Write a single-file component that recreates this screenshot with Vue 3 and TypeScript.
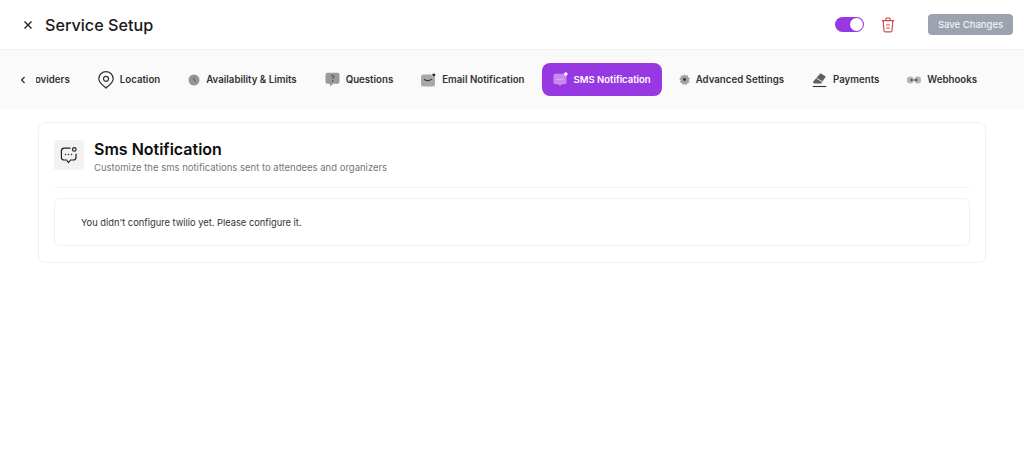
<script setup lang="ts">
interface Tab {
  label: string
  icon: string
  active?: boolean
}

const tabs: Tab[] = [
  { label: 'Providers', icon: 'none' },
  { label: 'Location', icon: 'pin' },
  { label: 'Availability & Limits', icon: 'clock' },
  { label: 'Questions', icon: 'question' },
  { label: 'Email Notification', icon: 'mail' },
  { label: 'SMS Notification', icon: 'sms', active: true },
  { label: 'Advanced Settings', icon: 'gear' },
  { label: 'Payments', icon: 'pay' },
  { label: 'Webhooks', icon: 'hook' },
]
</script>

<template>
  <div class="page">
    <header class="topbar">
      <div class="title-wrap">
        <svg class="close" viewBox="0 0 10 10" width="10" height="10">
          <path d="M1.500 1.500l7 7M8.500 1.500l-7 7" stroke="#222" stroke-width="1.400" fill="none" />
        </svg>
        <h1 class="title">Service Setup</h1>
      </div>
      <div class="actions">
        <span class="toggle"><span class="knob"></span></span>
        <svg class="trash" viewBox="0 0 14 16" width="14" height="16" fill="none" stroke="#d24a4a" stroke-width="1.200">
          <path d="M.8 3.600h12.400M4.600 3.400l.7-2.400h3.400l.7 2.400" stroke-linejoin="round" />
          <path d="M2.200 3.800l.8 10a1.200 1.200 0 0 0 1.200 1.100h5.600a1.200 1.200 0 0 0 1.200-1.100l.8-10" />
          <path d="M5 8h4M5 11h4" />
        </svg>
        <button class="save" type="button">Save Changes</button>
      </div>
    </header>

    <nav class="tabbar">
      <svg class="chev" viewBox="0 0 6 8" width="6" height="8">
        <path d="M4.600 1L1.600 4l3 3" stroke="#333" stroke-width="1.300" fill="none" />
      </svg>
      <div class="tabs">
        <div v-for="t in tabs" :key="t.label" class="tab" :class="{ active: t.active, first: t.icon === 'none' }">
          <svg v-if="t.icon === 'pin'" viewBox="0 0 16 18" width="16" height="18" fill="none" stroke="#333" stroke-width="1.200">
            <path d="M8 17c-1-1.200-7.200-4.600-7.200-9.200a7.200 7.200 0 0 1 14.400 0C15.200 12.400 9 15.800 8 17z" />
            <circle cx="8" cy="7.800" r="2.500" />
          </svg>
          <svg v-else-if="t.icon === 'clock'" viewBox="0 0 12 12" width="12" height="12">
            <circle cx="6" cy="6" r="5.500" fill="#969696" />
            <path d="M6 3.400V6l1.800 1.500" stroke="#555" stroke-width="1" fill="none" />
          </svg>
          <svg v-else-if="t.icon === 'question'" viewBox="0 0 15 15" width="15" height="15">
            <path d="M2.500 .8h10a2 2 0 0 1 2 2v7a2 2 0 0 1-2 2H8l-2.500 2.600-1-2.600h-2a2 2 0 0 1-2-2v-7a2 2 0 0 1 2-2z" fill="#9a9a9a" />
            <path d="M6.200 4.400c.3-1.300 2.800-1.200 2.800.3 0 1-1.400 1-1.400 2.200" stroke="#333" stroke-width="1" fill="none" />
            <circle cx="7.600" cy="9" r=".7" fill="#333" />
          </svg>
          <svg v-else-if="t.icon === 'mail'" viewBox="0 0 15 14" width="15" height="14">
            <rect x="0" y="1.500" width="14" height="12" rx="2.500" fill="#a8a8a8" />
            <path d="M3 6c1.500 2.200 6 2.200 8 0" stroke="#333" stroke-width="1.100" fill="none" />
            <circle cx="12.800" cy="2" r="1.800" fill="#222" stroke="#fafafa" stroke-width=".6" />
          </svg>
          <svg v-else-if="t.icon === 'sms'" viewBox="0 0 15 15" width="15" height="15">
            <path d="M2.500 1.800h9a2 2 0 0 1 2 2v6.400a2 2 0 0 1-2 2H8.500l-1.500 2-1.500-2h-3a2 2 0 0 1-2-2V3.800a2 2 0 0 1 2-2z" fill="#c78bf0" />
            <circle cx="4.500" cy="7.500" r=".6" fill="#f3e6fc" />
            <circle cx="7" cy="7.500" r=".6" fill="#f3e6fc" />
            <circle cx="9.500" cy="7.500" r=".6" fill="#f3e6fc" />
            <circle cx="12.800" cy="2" r="1.800" fill="#fff" />
          </svg>
          <svg v-else-if="t.icon === 'gear'" viewBox="0 0 11 11" width="11" height="11">
            <path d="M5.500 0l1.300 1.700 2.100-.4.300 2.100L11 4.500l-1.200 1.800.7 2-2 .6-.8 2-1.900-.9-1.900.9-.9-2-2-.6.700-2L0 4.500l1.800-1.100.3-2.100 2.100.4z" fill="#a0a0a0" />
            <circle cx="5.500" cy="5.500" r="1.400" fill="#333" />
          </svg>
          <svg v-else-if="t.icon === 'pay'" viewBox="0 0 15 16" width="15" height="16">
            <path d="M8.500 1.200l5.300 3.300-4.600 7H2.400a1.300 1.300 0 0 1-1.100-2z" fill="#5f5f5f" />
            <path d="M4.600 6.400l5.800 3.400" stroke="#d8d8d8" stroke-width="1.100" />
            <path d="M.8 14.500h13.400" stroke="#333" stroke-width="1.100" />
          </svg>
          <svg v-else-if="t.icon === 'hook'" viewBox="0 0 14 8" width="14" height="8">
            <rect x="0" y="0.500" width="6.500" height="7" rx="3" fill="#b4b4b4" />
            <rect x="7.500" y="0.500" width="6.500" height="7" rx="3" fill="#b4b4b4" />
            <path d="M3.500 4h7M4.500 2.800v2.400M9.500 2.800v2.400" stroke="#444" stroke-width=".9" fill="none" />
          </svg>
          <span class="tab-label">{{ t.label }}</span>
        </div>
      </div>
    </nav>

    <main class="content">
      <section class="card">
        <div class="card-head">
          <div class="head-icon">
            <svg viewBox="0 0 18 18" width="18" height="18" fill="none" stroke="#222" stroke-width="1.200">
              <path d="M10 2.200H4.200a2.800 2.800 0 0 0-2.800 2.800v6.200a2.800 2.800 0 0 0 2.800 2.800h2.300L8.500 16.500l2-2.500h2.700a2.800 2.800 0 0 0 2.800-2.800V8" stroke-linecap="round" />
              <circle cx="14.300" cy="3.400" r="1.800" />
              <circle cx="5.500" cy="8.500" r=".5" fill="#222" stroke-width=".5" />
              <circle cx="8.500" cy="8.500" r=".5" fill="#222" stroke-width=".5" />
              <circle cx="11.500" cy="8.500" r=".5" fill="#222" stroke-width=".5" />
            </svg>
          </div>
          <div>
            <h2 class="card-title">Sms Notification</h2>
            <p class="card-sub">Customize the sms notifications sent to attendees and organizers</p>
          </div>
        </div>
        <div class="notice">You didn't configure twilio yet. Please configure it.</div>
      </section>
    </main>
  </div>
</template>

<style>
html,
body {
  margin: 0;
  background: #fff;
}
</style>

<style scoped>
.page {
  width: 1024px;
  height: 469px;
  overflow: hidden;
  background: #fff;
  font-family: Inter, "Liberation Sans", sans-serif;
  color: #111;
}
.topbar {
  height: 50px;
  box-sizing: border-box;
  border-bottom: 1px solid #f0f0f0;
  display: flex;
  align-items: center;
  justify-content: space-between;
  padding: 0 11px 0 23px;
}
.title-wrap {
  display: flex;
  align-items: center;
  gap: 12px;
}
.title {
  margin: 0;
  font-size: 16.200px;
  font-weight: 500;
  color: #1a1a1a;
}
.actions {
  display: flex;
  align-items: center;
}
.toggle {
  width: 29px;
  height: 15px;
  border-radius: 8px;
  background: #9738e3;
  display: flex;
  align-items: center;
  justify-content: flex-end;
  padding-right: 1px;
  box-sizing: border-box;
}
.knob {
  width: 13px;
  height: 13px;
  border-radius: 50%;
  background: #fff;
}
.trash {
  margin-left: 17px;
}
.save {
  margin-left: 33px;
  width: 85px;
  height: 21px;
  border: 0;
  border-radius: 4px;
  background: #9ca3af;
  color: #f1f2f4;
  font-family: inherit;
  font-size: 9.500px;
  font-weight: 500;
  padding: 0;
}
.tabbar {
  height: 59px;
  background: #fafafa;
  display: flex;
  align-items: center;
  padding-left: 20px;
}
.chev {
  flex: none;
}
.tabs {
  margin-left: 10px;
  flex: 1;
  min-width: 0;
  overflow: hidden;
  display: flex;
  align-items: center;
  gap: 6px;
}
.tab {
  flex: none;
  height: 33px;
  border-radius: 8px;
  padding: 0 11px;
  display: flex;
  align-items: center;
  gap: 6px;
  font-size: 9.700px;
  font-weight: 600;
  color: #333;
  box-sizing: border-box;
}
.tab.first {
  margin-left: -22px;
}
.tab.active {
  background: #9738e3;
  color: #fff;
  font-size: 9.500px;
}
.content {
  padding: 13px 38px 0;
}
.card {
  border: 1px solid #f2f2f2;
  border-radius: 8px;
  padding: 17px 15px 16px;
}
.card-head {
  display: flex;
  gap: 10px;
  padding-bottom: 13px;
  border-bottom: 1px solid #f2f2f2;
}
.head-icon {
  width: 30px;
  height: 30px;
  border-radius: 3px;
  background: #f2f2f2;
  display: flex;
  align-items: center;
  justify-content: center;
}
.card-title {
  margin: 0;
  font-size: 16px;
  line-height: 18px;
  font-weight: 600;
  color: #0d0d0d;
}
.card-sub {
  margin: 3px 0 0;
  font-size: 9.500px;
  line-height: 13px;
  color: #777;
}
.notice {
  margin-top: 10px;
  height: 48px;
  box-sizing: border-box;
  border: 1px solid #f2f2f2;
  border-radius: 6px;
  padding: 0 26px;
  display: flex;
  align-items: center;
  font-size: 9.300px;
  color: #333;
}
</style>
